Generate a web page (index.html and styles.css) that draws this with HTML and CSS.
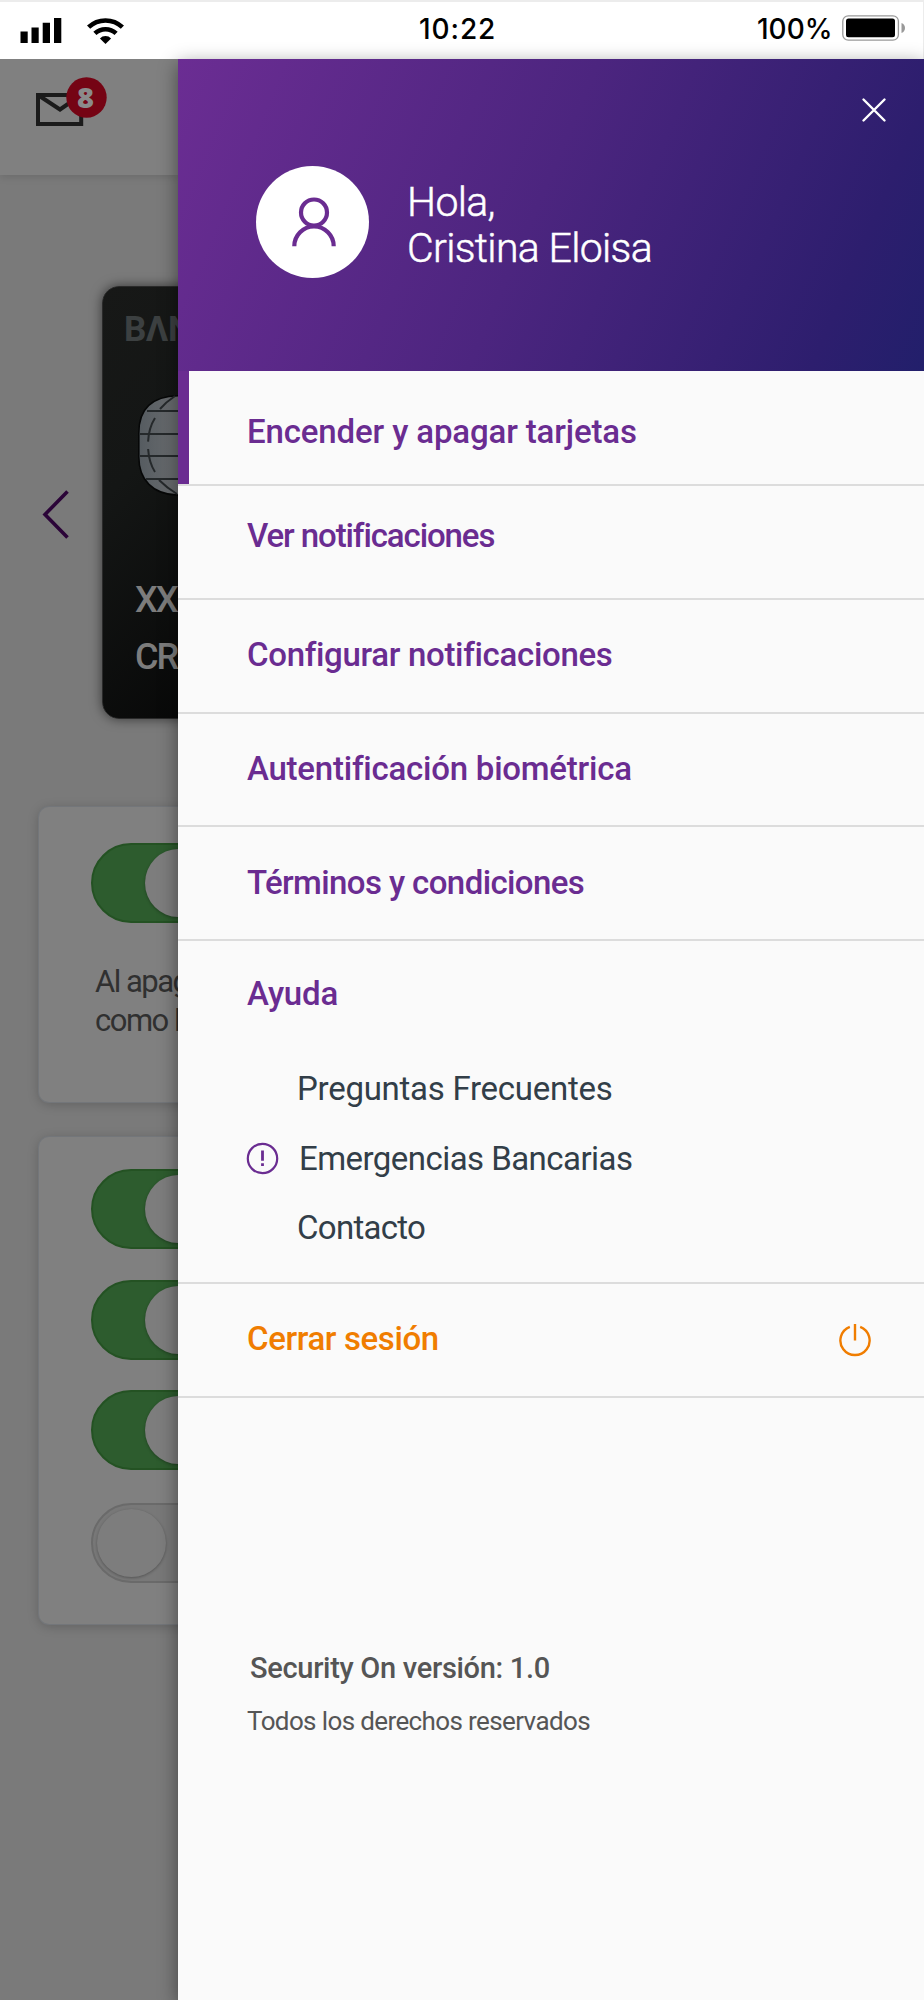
FILE: index.html
```html
<!DOCTYPE html>
<html lang="es">
<head>
<meta charset="utf-8">
<title>Security On</title>
<link rel="stylesheet" href="styles.css">
</head>
<body>
<div class="phone">
  <header class="status">
    <div class="status-left">
      <svg width="42" height="25" viewBox="0 0 42 25"><path d="M.5 13.5h7.2V25H.5zM11.5 9.5h7.2V25h-7.2zM22.700 4.700h7.300V25h-7.300zM34 0h7.300v25H34z"/></svg>
      <svg width="37" height="26" viewBox="0 0 37 26"><g fill="none" stroke="#000" stroke-width="4.600"><path d="M1.600 9.200a24.500 24.500 0 0 1 33.800 0"/><path d="M7.900 15.400a15.500 15.500 0 0 1 21.200 0"/></g><path d="M18.500 26l-5.600-5.600a8 8 0 0 1 11.200 0z"/></svg>
    </div>
    <div class="clock">10:22</div>
    <div class="status-right">
      <span>100%</span>
      <svg width="64" height="26" viewBox="0 0 64 26"><rect x=".8" y=".8" width="55.600" height="24.400" rx="5.500" fill="#fff" stroke="#999" stroke-width="1.300"/><rect x="4" y="3.500" width="49" height="18.800" rx="2.500"/><path d="M59.500 8c4.700 1.500 4.700 8.500 0 10z" fill="#999"/></svg>
    </div>
  </header>
  <div class="stage">
    <main class="page">
      <div class="topbar">
        <svg width="72" height="50" viewBox="0 0 72 50"><path d="M2 18h43.200v29H2z" fill="none" stroke="#1b1b1b" stroke-width="4"/><path d="M2 18l22 14.500L45 18" fill="none" stroke="#1b1b1b" stroke-width="4"/><circle cx="50.500" cy="20.500" r="20.200" fill="#750414"/></svg>
        <span class="badge">8</span>
      </div>
      <div class="carousel">
        <svg class="prev" width="28" height="50" viewBox="0 0 28 50"><path d="M25.500 1.500L3 24.500l22.500 23" fill="none" stroke="#2b0438" stroke-width="3.600"/></svg>
        <div class="card">
          <div class="brand">BΛN</div>
          <svg class="chip" width="80" height="101" viewBox="0 0 80 101">
            <defs><linearGradient id="chip-metal" x1="0" x2=".6"><stop offset="0" stop-color="#555b60"/><stop offset="1" stop-color="#707274"/></linearGradient></defs>
            <path d="M.8 38C.8 14 14 .8 42 .8H80v99.400H42C14 100.200.8 84 .8 62z" fill="url(#chip-metal)" stroke="#060707" stroke-width="1.600"/>
            <path d="M9 16h71M1 39h79M1 61h79M8 84h72M37 1Q28 7 22 14M21 85q8 8 18 14" fill="none" stroke="#25292b" stroke-width="2"/>
            <path d="M17 23Q10 34 10 50T17 77" fill="none" stroke="#25292b" stroke-width="2" stroke-dasharray="25 7"/>
          </svg>
          <div class="holder">XXX<br>CR</div>
        </div>
      </div>
      <section class="panel panel-main">
        <div class="toggle on"><i></i></div>
        <p>Al apag<br>como l</p>
      </section>
      <section class="panel panel-list">
        <div class="toggle on"><i></i></div>
        <div class="toggle on"><i></i></div>
        <div class="toggle on"><i></i></div>
        <div class="toggle off"><i></i></div>
      </section>
    </main>
    <aside class="drawer">
      <div class="hero">
        <svg class="close" width="26" height="26" viewBox="0 0 26 26"><path d="M2.500 2.500l21 21M23.500 2.500l-21 21" stroke="#fff" stroke-width="2.400" stroke-linecap="round"/></svg>
        <div class="user">
          <svg width="113" height="112" viewBox="0 0 113 112"><ellipse cx="56.500" cy="56" rx="56.500" ry="56" fill="#fff"/><g fill="none" stroke="#6a2c91" stroke-width="4.200"><circle cx="58" cy="46.500" r="13"/><path d="M38.300 80.200a19.700 19.700 0 0 1 39.400 0"/></g></svg>
          <div class="greet">Hola,<br>Cristina Eloisa</div>
        </div>
      </div>
      <nav>
        <a class="row cards active">Encender y apagar tarjetas</a>
        <a class="row inbox">Ver notificaciones</a>
        <a class="row config">Configurar notificaciones</a>
        <a class="row biometric">Autentificación biométrica</a>
        <a class="row terms">Términos y condiciones</a>
        <div class="help">
          <a class="help-title">Ayuda</a>
          <a class="sub faq">Preguntas Frecuentes</a>
          <a class="sub emergency"><svg width="33" height="33" viewBox="0 0 33 33"><circle cx="16.500" cy="16.500" r="14.700" fill="none" stroke="#6a2c91" stroke-width="2.200"/><path d="M15.100 8.500h2.800v10.300h-2.800zM15.100 21.300h2.800v2.700h-2.800z" fill="#6a2c91"/></svg><span>Emergencias Bancarias</span></a>
          <a class="sub contact">Contacto</a>
        </div>
        <a class="row logout"><span>Cerrar sesión</span><svg width="34" height="34" viewBox="0 0 34 34"><g fill="none" stroke="#f07d00" stroke-width="2.400"><path d="M11.800 3.800a14.600 14.600 0 1 0 10.400 0M17 1v16.500"/></g></svg></a>
      </nav>
      <footer>
        <div class="version">Security On versión: 1.0</div>
        <div class="rights">Todos los derechos reservados</div>
      </footer>
    </aside>
  </div>
</div>
</body>
</html>
```
FILE: styles.css
```css
* { box-sizing: border-box; }
body { margin: 0; font-family: Roboto, "Liberation Sans", sans-serif; background: #7a7a7a; }
svg { display: block; flex: none; }
.phone { width: 924px; height: 2000px; overflow: hidden; display: flex; flex-direction: column; }

/* Status bar */
.status { height: 59px; flex: none; display: grid; grid-template-columns: 419px 338px 166px; background: #fff; border-top: 2px solid #ececec; border-right: 1px solid #ececec; font: 500 28px/34px Inter, "Liberation Sans", sans-serif; color: #000; }
.status-left { display: flex; gap: 25px; padding: 16px 0 0 20px; }
.clock { padding-top: 10px; letter-spacing: .9px; }
.status-right { display: flex; padding-top: 10px; justify-content: space-between; padding-right: 17px; }
.status-right svg { margin-top: 3px; }

.stage { flex: 1; display: grid; grid-template-columns: 178px 746px; min-height: 0; }

/* Dimmed page behind the drawer */
.page { overflow: hidden; background: #7a7a7a; }
.topbar { height: 116px; background: #808080; padding: 18px 0 0 36px; box-shadow: 0 2px 8px rgba(0,0,0,.12); display: grid; grid-template-columns: 72px; }
.topbar svg, .badge { grid-area: 1 / 1; }
.badge { color: #8b8b8b; font: 800 29px/39px "Open Sans", sans-serif; text-align: center; width: 41px; margin-left: 29px; }
.carousel { display: flex; padding: 111px 0 0 42px; height: 632px; }
.prev { margin: 204px 32px 0 0; }
.card { width: 640px; flex: none; height: 433px; border-radius: 17px; background: linear-gradient(135deg, #171817, #141615 20%, #050505 55%); box-shadow: 0 0 12px rgba(0,0,0,.55); border: 1px solid #2a2a2a; padding: 22px 0 0 21px; }
.brand { font: 700 35px/42px Roboto, sans-serif; color: #3c4041; height: 42px; letter-spacing: -.5px; }
.chip { margin: 44px 0 0 14px; }
.holder { margin: 76px 0 0 11px; font-weight: 500; font-size: 36px; line-height: 57px; color: #7c7c7c; white-space: nowrap; letter-spacing: -2px; }
.panel { margin-left: 39px; width: 846px; border-radius: 10px; background: #808080; box-shadow: 0 0 0 1px #73767a, 0 2px 12px rgba(0,0,0,.22); }
.panel-main { height: 295px; padding: 36px 0 0 52px; }
.panel-list { height: 487px; margin-top: 35px; padding: 32px 0 0 52px; }
.panel p { margin: 0 0 0 4px; padding-top: 9px; font-size: 31px; line-height: 39px; color: #303030; letter-spacing: -1.5px; }
.toggle { width: 127px; height: 80px; border-radius: 40px; border: 2px solid #245223; background: #2d5c2e; padding: 4px; display: flex; justify-content: flex-end; margin-bottom: 30.5px; }
.toggle i { width: 67px; height: 68px; border-radius: 50%; background: #7d7d7d; box-shadow: 0 1px 3px rgba(0,0,0,.3); }
.off { background: #787878; border-color: #6a6a6a; justify-content: flex-start; margin-top: 33px; }
.off i { width: 69px; }

/* Drawer */
.drawer { background: #fafafa; box-shadow: 0 5px 18px rgba(0,0,0,.45); position: relative; }
.hero { height: 312px; background: linear-gradient(113deg, #6b2d93 0%, #4c257f 48%, #2d1e6e 87%, #221f6b 100%); padding: 38px 37px 0 78px; }
.close { margin-left: auto; }
.user { display: flex; gap: 38px; margin-top: 43px; }
.greet { color: #fff; font-weight: 300; font-size: 41px; line-height: 46px; padding-top: 13px; white-space: nowrap; letter-spacing: -.65px; -webkit-text-stroke: .5px #fff; }
.row { display: flex; justify-content: space-between; height: 114px; border-bottom: 2px solid #dcdcdc; padding: 35px 52px 0 69px; color: #6a2c91; font-weight: 500; font-size: 33px; line-height: 40px; }
.active { height: 115px; background: linear-gradient(#6a2c91, #6a2c91) 0 0 / 11px 114px no-repeat; }
.cards { padding-top: 41px; letter-spacing: -.14px; }
.inbox { padding-top: 30px; letter-spacing: -1.1px; }
.config { letter-spacing: -.32px; }
.biometric { height: 113px; letter-spacing: -.23px; }
.terms { padding-top: 36px; letter-spacing: -.6px; }
.help { height: 343px; border-bottom: 2px solid #dcdcdc; padding: 33px 0 0 69px; font-size: 33px; line-height: 40px; color: #323e48; }
.help a { display: flex; }
.help-title { color: #6a2c91; font-weight: 500; margin-bottom: 55px; letter-spacing: -.2px; }
.sub { height: 40px; margin-bottom: 30px; padding-left: 50px; }
.faq { letter-spacing: -.27px; }
.emergency { padding: 0; gap: 20px; margin-bottom: 29px; letter-spacing: -.55px; }
.emergency svg { margin: 3px 0 0 -1px; }
.contact { letter-spacing: -.7px; }
.logout { color: #f07d00; letter-spacing: -.38px; }
.logout svg { margin-top: 4px; }
footer { padding: 250px 0 0 69px; color: #555; }
.version { font-weight: 500; font-size: 29px; line-height: 40px; padding-left: 3px; letter-spacing: -.3px; }
.rights { font-size: 26px; line-height: 40px; margin-top: 13px; letter-spacing: -.62px; }
.panel-main .toggle { margin-bottom: 30px; }
```
